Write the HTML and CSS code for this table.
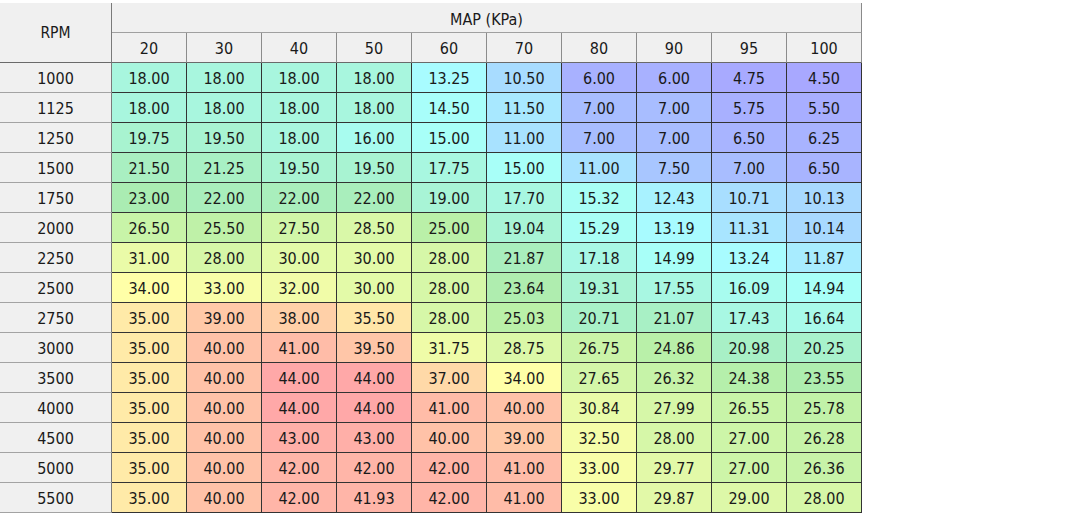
FILE: index.html
```html
<!DOCTYPE html>
<html>
<head>
<meta charset="utf-8">
<link rel="stylesheet" href="styles.css">
</head>
<body>
<div class="map-table">
  <div class="corner">RPM</div>
  <div class="map-title">MAP (KPa)</div>
  <div class="col-head">20</div><div class="col-head">30</div><div class="col-head">40</div><div class="col-head">50</div><div class="col-head">60</div><div class="col-head">70</div><div class="col-head">80</div><div class="col-head">90</div><div class="col-head">95</div><div class="col-head">100</div>

  <div class="row-head">1000</div><div class="val">18.00</div><div class="val">18.00</div><div class="val">18.00</div><div class="val">18.00</div><div class="val">13.25</div><div class="val">10.50</div><div class="val">6.00</div><div class="val">6.00</div><div class="val">4.75</div><div class="val">4.50</div>
  <div class="row-head">1125</div><div class="val">18.00</div><div class="val">18.00</div><div class="val">18.00</div><div class="val">18.00</div><div class="val">14.50</div><div class="val">11.50</div><div class="val">7.00</div><div class="val">7.00</div><div class="val">5.75</div><div class="val">5.50</div>
  <div class="row-head">1250</div><div class="val">19.75</div><div class="val">19.50</div><div class="val">18.00</div><div class="val">16.00</div><div class="val">15.00</div><div class="val">11.00</div><div class="val">7.00</div><div class="val">7.00</div><div class="val">6.50</div><div class="val">6.25</div>
  <div class="row-head">1500</div><div class="val">21.50</div><div class="val">21.25</div><div class="val">19.50</div><div class="val">19.50</div><div class="val">17.75</div><div class="val">15.00</div><div class="val">11.00</div><div class="val">7.50</div><div class="val">7.00</div><div class="val">6.50</div>
  <div class="row-head">1750</div><div class="val">23.00</div><div class="val">22.00</div><div class="val">22.00</div><div class="val">22.00</div><div class="val">19.00</div><div class="val">17.70</div><div class="val">15.32</div><div class="val">12.43</div><div class="val">10.71</div><div class="val">10.13</div>
  <div class="row-head">2000</div><div class="val">26.50</div><div class="val">25.50</div><div class="val">27.50</div><div class="val">28.50</div><div class="val">25.00</div><div class="val">19.04</div><div class="val">15.29</div><div class="val">13.19</div><div class="val">11.31</div><div class="val">10.14</div>
  <div class="row-head">2250</div><div class="val">31.00</div><div class="val">28.00</div><div class="val">30.00</div><div class="val">30.00</div><div class="val">28.00</div><div class="val">21.87</div><div class="val">17.18</div><div class="val">14.99</div><div class="val">13.24</div><div class="val">11.87</div>
  <div class="row-head">2500</div><div class="val">34.00</div><div class="val">33.00</div><div class="val">32.00</div><div class="val">30.00</div><div class="val">28.00</div><div class="val">23.64</div><div class="val">19.31</div><div class="val">17.55</div><div class="val">16.09</div><div class="val">14.94</div>
  <div class="row-head">2750</div><div class="val">35.00</div><div class="val">39.00</div><div class="val">38.00</div><div class="val">35.50</div><div class="val">28.00</div><div class="val">25.03</div><div class="val">20.71</div><div class="val">21.07</div><div class="val">17.43</div><div class="val">16.64</div>
  <div class="row-head">3000</div><div class="val">35.00</div><div class="val">40.00</div><div class="val">41.00</div><div class="val">39.50</div><div class="val">31.75</div><div class="val">28.75</div><div class="val">26.75</div><div class="val">24.86</div><div class="val">20.98</div><div class="val">20.25</div>
  <div class="row-head">3500</div><div class="val">35.00</div><div class="val">40.00</div><div class="val">44.00</div><div class="val">44.00</div><div class="val">37.00</div><div class="val">34.00</div><div class="val">27.65</div><div class="val">26.32</div><div class="val">24.38</div><div class="val">23.55</div>
  <div class="row-head">4000</div><div class="val">35.00</div><div class="val">40.00</div><div class="val">44.00</div><div class="val">44.00</div><div class="val">41.00</div><div class="val">40.00</div><div class="val">30.84</div><div class="val">27.99</div><div class="val">26.55</div><div class="val">25.78</div>
  <div class="row-head">4500</div><div class="val">35.00</div><div class="val">40.00</div><div class="val">43.00</div><div class="val">43.00</div><div class="val">40.00</div><div class="val">39.00</div><div class="val">32.50</div><div class="val">28.00</div><div class="val">27.00</div><div class="val">26.28</div>
  <div class="row-head">5000</div><div class="val">35.00</div><div class="val">40.00</div><div class="val">42.00</div><div class="val">42.00</div><div class="val">42.00</div><div class="val">41.00</div><div class="val">33.00</div><div class="val">29.77</div><div class="val">27.00</div><div class="val">26.36</div>
  <div class="row-head">5500</div><div class="val">35.00</div><div class="val">40.00</div><div class="val">42.00</div><div class="val">41.93</div><div class="val">42.00</div><div class="val">41.00</div><div class="val">33.00</div><div class="val">29.87</div><div class="val">29.00</div><div class="val">28.00</div>
</div>
<script src="script.js"></script>
</body>
</html>
```

FILE: styles.css
```css
html, body {
  margin: 0;
  padding: 0;
  background: #ffffff;
}

body {
  padding-top: 3px;
  font-family: "DejaVu Sans Condensed", "DejaVu Sans", sans-serif;
  font-stretch: condensed;
  color: #1a1a1a;
}

.map-table {
  display: grid;
  grid-template-columns: 112px repeat(10, 75px);
  grid-auto-rows: 30px;
  width: 862px;
}

.map-table > div {
  box-sizing: border-box;
  display: flex;
  align-items: center;
  justify-content: center;
  padding-top: 1px;
  border-right: 1px solid #333333;
  border-bottom: 1px solid #333333;
  font-size: 16px;
}

.corner {
  grid-row: span 2;
  background: #f0f0f0;
  border-right-color: #7a7a7a !important;
  border-bottom-color: #6a6a6a !important;
  font-size: 15.5px !important;
}

.map-title {
  grid-column: span 10;
  background: #f0f0f0;
  border-right-color: #8a8a8a !important;
  border-bottom-color: #a0a0a0 !important;
  font-size: 16px !important;
  padding-top: 3px !important;
}

.col-head {
  background: #f0f0f0;
  border-right-color: #8c8c8c !important;
  border-bottom-color: #6a6a6a !important;
}

.row-head {
  background: #f0f0f0;
  border-right-color: #7a7a7a !important;
  border-bottom-color: #a3a3a3 !important;
}

.val {
  background: #cccccc;
  border-color: #2a2a2a;
}
```

FILE: script.js
```js
(function () {
  var stops = [
    [4.5, [168, 168, 255]],
    [6.5, [168, 180, 255]],
    [7.5, [168, 198, 255]],
    [10.5, [168, 220, 255]],
    [13.25, [168, 252, 255]],
    [15, [168, 255, 248]],
    [18, [168, 246, 222]],
    [21, [168, 240, 198]],
    [23, [170, 236, 178]],
    [25, [186, 240, 168]],
    [28, [214, 247, 168]],
    [31, [234, 251, 168]],
    [34, [255, 255, 168]],
    [35, [255, 234, 168]],
    [38, [255, 208, 168]],
    [40, [255, 194, 168]],
    [44, [255, 168, 168]]
  ];
  function colorFor(v) {
    if (v <= stops[0][0]) return stops[0][1];
    for (var i = 1; i < stops.length; i++) {
      if (v <= stops[i][0]) {
        var a = stops[i - 1], b = stops[i];
        var t = (v - a[0]) / (b[0] - a[0]);
        return [0, 1, 2].map(function (k) {
          return Math.round(a[1][k] + (b[1][k] - a[1][k]) * t);
        });
      }
    }
    return stops[stops.length - 1][1];
  }
  var cells = document.querySelectorAll('.val');
  for (var i = 0; i < cells.length; i++) {
    var c = colorFor(parseFloat(cells[i].textContent));
    cells[i].style.backgroundColor = 'rgb(' + c.join(',') + ')';
  }
})();
```
